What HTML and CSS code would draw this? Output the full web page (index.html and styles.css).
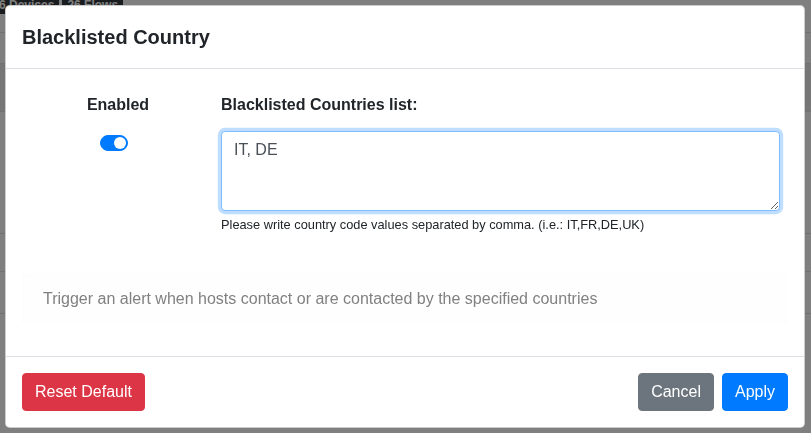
FILE: index.html
```html
<!DOCTYPE html>
<html lang="en">
<head>
<meta charset="utf-8">
<title>Blacklisted Country</title>
<link rel="stylesheet" href="styles.css">
</head>
<body>
<div class="page">
  <div class="topbar">
    <span class="badge">6 Devices</span>
    <span class="badge">26 Flows</span>
  </div>
  <div class="bg-row bg-row-1"></div>
  <div class="bg-row bg-row-2"></div>
  <div class="bg-row bg-row-3"></div>
  <div class="bg-row bg-row-4"><span class="bg-title">Alerts</span></div>
  <div class="bg-row bg-row-5"></div>
</div>

<div class="backdrop"></div>

<div class="modal">
  <div class="modal-dialog">
    <div class="modal-content">
      <div class="modal-header">
        <h5 class="modal-title">Blacklisted Country</h5>
      </div>
      <div class="modal-body">
        <div class="form-row">
          <div class="col-enabled">
            <label class="label">Enabled</label>
            <span class="switch"><span class="knob"></span></span>
          </div>
          <div class="col-list">
            <label class="label">Blacklisted Countries list:</label>
            <textarea class="textarea" rows="3">IT, DE</textarea>
            <small class="help">Please write country code values separated by comma. (i.e.: IT,FR,DE,UK)</small>
          </div>
        </div>
        <div class="alert">Trigger an alert when hosts contact or are contacted by the specified countries</div>
      </div>
      <div class="modal-footer">
        <button class="btn btn-danger">Reset Default</button>
        <span class="spacer"></span>
        <button class="btn btn-secondary">Cancel</button>
        <button class="btn btn-primary">Apply</button>
      </div>
    </div>
  </div>
</div>
</body>
</html>
```

FILE: styles.css
```css
* { box-sizing: border-box; }

html, body {
  margin: 0;
  padding: 0;
  height: 100%;
}

body {
  font-family: "Liberation Sans", Arial, sans-serif;
  font-size: 16px;
  line-height: 1.5;
  color: #212529;
  background: #fff;
  overflow: hidden;
}

/* background page */
.page {
  width: 811px;
  height: 433px;
  display: flex;
  flex-direction: column;
}

.topbar {
  height: 33px;
  border-bottom: 1px solid #dee2e6;
  display: flex;
  gap: 3px;
  align-items: flex-start;
}

.badge {
  display: inline-block;
  background: #343a40;
  color: #fff;
  font-size: 12px;
  font-weight: 700;
  line-height: 1;
  padding: 1px 5px 3px;
  margin-top: -2px;
  border-radius: 0 0 2px 2px;
}

.badge:first-child { margin-left: -6px; }

.bg-row { border-bottom: 1px solid #dee2e6; }
.bg-row-1 { height: 31px; }
.bg-row-2 { height: 48px; background: #ececec; }
.bg-row-3 { height: 122px; }
.bg-row-4 {
  height: 38px;
  text-align: right;
  padding-top: 9px;
  overflow: hidden;
}
.bg-title {
  font-weight: 700;
  font-size: 16px;
  margin-right: -51px;
}
.bg-row-5 { height: 42px; }

/* overlay */
.backdrop {
  position: fixed;
  inset: 0;
  background: rgba(0, 0, 0, 0.5);
}

.modal {
  position: fixed;
  inset: 0;
}

.modal-dialog {
  width: 800px;
  margin: 5px 0 0 5px;
}

.modal-content {
  background: #fff;
  border: 1px solid rgba(0, 0, 0, 0.2);
  border-radius: 4.8px;
  display: flex;
  flex-direction: column;
}

.modal-header {
  padding: 16px;
  border-bottom: 1px solid #dee2e6;
}

.modal-title {
  margin: 0;
  font-size: 20px;
  font-weight: 700;
  line-height: 1.5;
}

.modal-body {
  padding: 16px;
}

.form-row {
  display: flex;
  margin-top: 8px;
}

.col-enabled {
  width: 192px;
  flex: none;
  display: flex;
  flex-direction: column;
  align-items: center;
}

.col-list {
  flex: 1;
  margin-left: 7px;
  margin-right: 8px;
  display: flex;
  flex-direction: column;
}

.label {
  display: block;
  font-weight: 700;
  margin-bottom: 8px;
}

.switch {
  display: block;
  position: relative;
  width: 28px;
  height: 16px;
  margin-top: 10px;
  margin-right: 8px;
  background: #007bff;
  border: 1px solid #007bff;
  border-radius: 8px;
}

.knob {
  position: absolute;
  top: 1px;
  right: 1px;
  width: 12px;
  height: 12px;
  background: #fff;
  border-radius: 50%;
}

.textarea {
  display: block;
  width: 100%;
  height: 80px;
  margin-top: 6px;
  padding: 6px 12px;
  font-family: inherit;
  font-size: 16px;
  line-height: 1.5;
  color: #495057;
  background: #fff;
  border: 1px solid #80bdff;
  border-radius: 4px;
  box-shadow: 0 0 0 3.2px rgba(0, 123, 255, 0.25);
  outline: none;
  resize: vertical;
}

.help {
  display: block;
  margin-top: 4px;
  font-size: 12.8px;
  line-height: 1.5;
  color: #212529;
}

.alert {
  margin-top: 40px;
  margin-bottom: 16px;
  padding: 12px 20px;
  color: #818182;
  background: #fefefe;
  border: 1px solid #fdfdfe;
  border-radius: 4px;
}

.modal-footer {
  display: flex;
  align-items: center;
  padding: 12px;
  border-top: 1px solid #dee2e6;
}

.spacer { flex: 1; }

.btn {
  margin: 4px;
  font-family: inherit;
  font-size: 16px;
  line-height: 1.5;
  padding: 6px 12px;
  border: 1px solid transparent;
  border-radius: 4px;
  color: #fff;
  cursor: pointer;
}

.btn-danger { background: #dc3545; border-color: #dc3545; }
.btn-secondary { background: #6c757d; border-color: #6c757d; }
.btn-primary { background: #007bff; border-color: #007bff; }
```
